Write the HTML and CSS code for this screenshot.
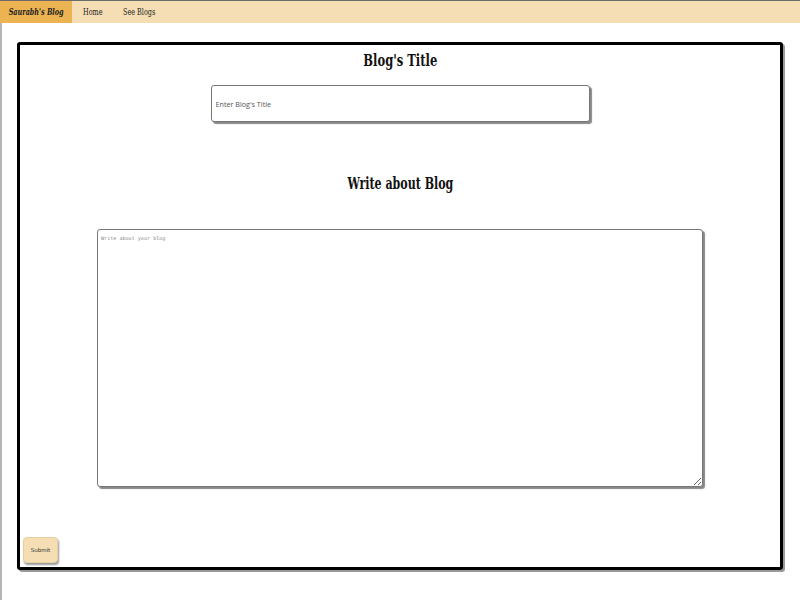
FILE: index.html
```html
<!DOCTYPE html>
<html>
<head>
<meta charset="utf-8">
<link rel="stylesheet" href="styles.css">
</head>
<body>
<nav class="nav">
  <a class="brand"><span class="cond">Saurabh's Blog</span></a>
  <a class="link home"><span class="cond left">Home</span></a>
  <a class="link blogs"><span class="cond left">See Blogs</span></a>
</nav>
<div class="page">
  <form class="card">
    <h2 class="title"><span class="cond">Blog's Title</span></h2>
    <input class="title-input" type="text" placeholder="Enter Blog's Title">
    <h2 class="about"><span class="cond">Write about Blog</span></h2>
    <textarea class="body-input" placeholder="Write about your blog"></textarea>
    <div class="actions"><button class="submit" type="button">Submit</button></div>
  </form>
</div>
</body>
</html>
```
FILE: styles.css
```css
html, body { margin: 0; padding: 0; background: #fff; }
body { font-family: "DejaVu Serif", serif; height: 600px; overflow: hidden; }
.cond { display: inline-block; transform: scaleX(0.76); transform-origin: center; white-space: nowrap; }
.cond.left { transform-origin: left center; }
.nav {
  display: flex; align-items: stretch; height: 22px;
  background: #f5deb3; border-top: 1px solid #6b6b6b;
}
.nav a { display: flex; align-items: center; font-size: 8.5px; color: #222; font-family: "DejaVu Serif", serif; }
.brand {
  background: #ebb352; width: 72px; justify-content: center;
  font-weight: bold; font-style: italic; color: #1a1a1a;
}
.home { margin-left: 11px; width: 40px; }
.title, .about {
  margin: 0; font-family: "DejaVu Serif", serif;
  font-weight: bold; color: #111;
}
.title .cond { transform: scaleX(0.72); }
.about .cond { transform: scaleX(0.65); }
.page { border-left: 2px solid #b5b5b5; height: 577px; padding: 19px 0 0 15px; box-sizing: border-box; }
.card {
  width: 766px; height: 528px; box-sizing: border-box;
  border: 3px solid #000; border-radius: 3px;
  box-shadow: 2px 2px 0 #999;
  display: flex; flex-direction: column; align-items: center;
}
.title { font-size: 16px; margin-top: 4px; line-height: 24px; }
.title-input {
  margin-top: 12px; width: 379px; height: 37px; box-sizing: border-box;
  border: 1px solid #777; border-radius: 3px; box-shadow: 2px 2px 1px #888;
  padding: 0 4px; font-family: "Open Sans", sans-serif; font-size: 7.2px; outline: none;
}
.title-input::placeholder { color: #555; }
.about { font-size: 17px; margin-top: 48px; line-height: 26px; }
.body-input {
  margin-top: 33px; width: 606px; height: 258px; box-sizing: border-box;
  border: 1px solid #777; border-radius: 3px; box-shadow: 2px 2px 1px #888;
  padding: 5px 3px; font-family: "DejaVu Sans Mono", monospace; font-size: 5.1px; outline: none;
}
.body-input::placeholder { color: #888; }
.actions { align-self: stretch; margin-top: 50px; padding-left: 3px; }
.submit {
  width: 35px; height: 26px; background: #f5deb3; border: 1px solid #e6cfa3;
  border-radius: 4px; box-shadow: 1px 2px 2px #999;
  font-family: "DejaVu Sans", sans-serif; font-size: 5.5px; color: #333; padding: 0;
}
```
